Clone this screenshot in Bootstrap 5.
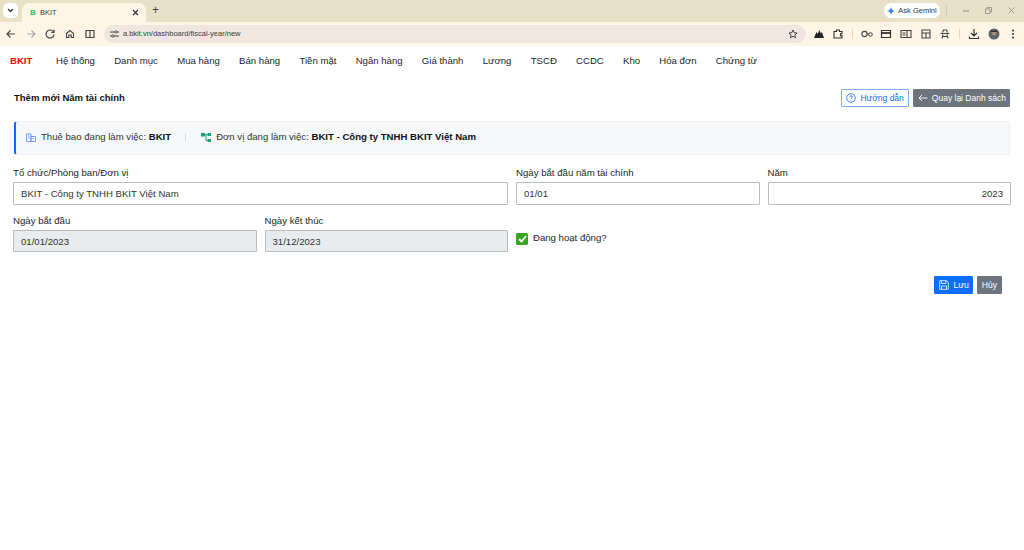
<!DOCTYPE html>
<html lang="vi">
<head>
  <meta charset="UTF-8" />
  <title>BKIT</title>
  <link href="https://cdn.jsdelivr.net/npm/bootstrap@5.3.3/dist/css/bootstrap.min.css" rel="stylesheet">
  <style>
    html, body { height: 100%; }
    body {
      background: #fff;
      color: #212529;
      font-family: "Liberation Sans", Arial, sans-serif;
      font-size: 9.6px;
      overflow: hidden;
    }
    .tab-strip { height: 22px; background: #e9e1c7; padding: 3px 0 0 3px; }
    .tab-list-btn { width: 15px; height: 15px; background: #fff; border-radius: 5px; margin-right: 4px; }
    .tab-item { width: 124px; height: 19px; background: #fdf6e6; border-radius: 7px 7px 0 0; padding: 0 7px 0 8px; font-size: 7.5px; color: #3c3c3c; }
    .tab-favicon { color: #22c55e; font-weight: 700; font-size: 8px; margin-right: 3px; width: 5px; }
    .tab-name { margin-left: 2px; }
    .new-tab { font-size: 12px; margin-left: 6px; color: #444; line-height: 1; padding-top: 1px; }
    .gemini-btn { height: 15px; width: 56px; background: #fff; border-radius: 7px; font-size: 7.5px; gap: 3px; color: #333; }
    .win-btns { width: 84px; height: 15px; padding: 0 9px 0 6px; }
    .win-sep { width: 1px; height: 9px; background: #cfc8b0; }
    .tool-row { height: 24px; background: #fdf6e6; padding: 0 0 0 4px; gap: 5.7px; }
    .tool-icon { width: 14px; height: 14px; flex: none; }
    .addr-pill { width: 702px; height: 18px; background: #efe7df; border-radius: 9px; margin-left: 1.5px; padding: 0 8px 0 6px; font-size: 7.5px; color: #3c3c3c; flex: none; }
    .tool-sep { width: 1px; height: 10px; background: #e8d9a0; flex: none; margin: 0 1px; }
    .app-nav { height: 29px; padding: 2px 0 0 10px; background: #fff; }
    .brand-txt { color: #f00; font-weight: 700; font-size: 9.6px; width: 46px; }
    .menu-item { color: #212529; font-size: 9.6px; margin-right: 19.25px; white-space: nowrap; }
    .page-wrap { padding: 0 13px; }
    .head-row { height: 46px; padding: 14px 1px 0 1px; }
    .page-title { font-size: 9.5px; font-weight: 700; color: #111; margin: 3px 0 0 0; }
    .btn-tiny { font-size: 8.5px; height: 18px; padding: 0 3px 0 4px; border-radius: 1px; display: inline-flex; align-items: center; gap: 4px; }
    .btn-help { --bs-btn-border-color: #7fb0fb; padding-right: 4px; }
    .info-strip { margin: 0 1px; height: 34px; background: #f7f8fa; border: 1px solid #f0f1f3; border-left: 2px solid #0d6efd; border-radius: 3px; padding: 0 0 2px 10px; font-size: 9.6px; color: #333; }
    .info-strip b { color: #111; }
    .info-lbl { margin-left: 5px; }
    .info-sep { width: 1px; height: 8px; background: #d8dbe0; margin: 0 15px 0 14px; }
    .form-zone { margin-top: 11px; }
    .form-zone .row { --bs-gutter-x: 8px; --bs-gutter-y: 0; }
    .fld-label { display: block; font-size: 9.65px; color: #212529; height: 14px; line-height: 14px; margin-bottom: 2px; }
    .fld-input { height: 23px; border: 1px solid #b9bcbf; border-radius: 1px; font-size: 9.6px; padding: 0 7px; color: #333; box-shadow: none; }
    .fld-input:disabled { background: #e9ecef; opacity: 1; height: 22px; }
    .row-two { margin-top: 9px; }
    .active-check { height: 23px; margin-top: 13px; gap: 5px; font-size: 9.6px; }
    .check-box { width: 12px; height: 12px; background: #37a51f; border-radius: 1.5px; flex: none; }
    .foot-bar { margin-top: 15px; height: 38px; border: 1px solid #fcfcfc; border-radius: 3px; padding: 8px 8px 0 0; gap: 4px; }
    .foot-bar .btn { font-size: 8.6px; height: 18px; padding: 0 4px; border-radius: 1px; display: inline-flex; align-items: center; gap: 4px; }
    .foot-bar .btn-primary { padding-right: 3px; }
  </style>
</head>
<body>
  <div class="tab-strip d-flex">
    <div class="tab-list-btn d-flex align-items-center justify-content-center">
      <svg width="7" height="5" viewBox="0 0 7 5"><path d="M1 1l2.500 2.500L6 1" fill="none" stroke="#333" stroke-width="1.400"/></svg>
    </div>
    <div class="tab-item d-flex align-items-center">
      <span class="tab-favicon">B</span><span class="tab-name">BKIT</span>
      <svg class="ms-auto" width="7" height="7" viewBox="0 0 7 7"><path d="M1 1l5 5M6 1L1 6" stroke="#333" stroke-width="1.200"/></svg>
    </div>
    <span class="new-tab">+</span>
    <div class="gemini-btn d-flex align-items-center justify-content-center ms-auto">
      <svg width="8" height="8" viewBox="0 0 8 8"><path d="M4 0C4.400 2.400 5.600 3.600 8 4 5.600 4.400 4.400 5.600 4 8 3.600 5.600 2.400 4.400 0 4 2.400 3.600 3.600 2.400 4 0z" fill="#3b82f6"/></svg>
      <span>Ask Gemini</span>
    </div>
    <div class="win-btns d-flex align-items-center justify-content-between">
      <span class="win-sep"></span>
      <svg width="6" height="2" viewBox="0 0 6 2"><path d="M0 1h6" stroke="#8d897c"/></svg>
      <svg width="7" height="7" viewBox="0 0 7 7"><path d="M.5 2h4.500v4.500H.5zM2 2V.5h4.500V5H5" fill="none" stroke="#8d897c" stroke-width=".8"/></svg>
      <svg width="7" height="7" viewBox="0 0 7 7"><path d="M.5.5l6 6M6.500.5l-6 6" stroke="#8d897c" stroke-width=".8"/></svg>
    </div>
  </div>

  <div class="tool-row d-flex align-items-center">
    <svg class="tool-icon" viewBox="0 0 14 14"><path d="M11 7H3M6.500 3.500L3 7l3.500 3.500" fill="none" stroke="#444" stroke-width="1.200"/></svg>
    <svg class="tool-icon" viewBox="0 0 14 14"><path d="M3 7h8M7.500 3.500L11 7l-3.500 3.500" fill="none" stroke="#aaa" stroke-width="1.200"/></svg>
    <svg class="tool-icon" viewBox="0 0 14 14"><path d="M10.500 5A4 4 0 1 0 11 7.500M11 2.800V5.500H8.300" fill="none" stroke="#444" stroke-width="1.200"/></svg>
    <svg class="tool-icon" viewBox="0 0 14 14"><path d="M3.500 6.500L7 3.500l3.500 3v4h-2.300V8H5.800v2.500H3.500z" fill="none" stroke="#444" stroke-width="1.100"/></svg>
    <svg class="tool-icon" viewBox="0 0 14 14"><path d="M3 3.500h8v7H3zM7 3.500v7" fill="none" stroke="#444" stroke-width="1.200"/></svg>
    <div class="addr-pill d-flex align-items-center">
      <svg width="9" height="8" viewBox="0 0 9 8" class="me-1"><path d="M0 2h5M7 2h2M0 6h2M4 6h5" stroke="#444"/><circle cx="6" cy="2" r="1.200" fill="none" stroke="#444" stroke-width=".8"/><circle cx="3" cy="6" r="1.200" fill="none" stroke="#444" stroke-width=".8"/></svg>
      <span>a.bkit.vn/dashboard/fiscal-year/new</span>
      <svg class="ms-auto" width="10" height="10" viewBox="0 0 10 10"><path d="M5 1l1.200 2.700 2.800.3-2.100 1.900.6 2.800L5 7.300 2.500 8.700l.6-2.800L1 4l2.800-.3z" fill="none" stroke="#333" stroke-width=".9"/></svg>
    </div>
    <svg class="tool-icon" viewBox="0 0 14 14"><path d="M2 11L4.500 5l1.200 2L7.300 3l1.500 3.500L9.800 5 12 11z" fill="#222"/></svg>
    <svg class="tool-icon" viewBox="0 0 14 14"><path d="M3 4.500h2.500V3h3v1.500H11v2.200H9.500v2H11V11H3z" fill="none" stroke="#333" stroke-width="1.100"/></svg>
    <span class="tool-sep"></span>
    <svg class="tool-icon" viewBox="0 0 14 14"><circle cx="4.500" cy="7" r="2.600" fill="none" stroke="#444" stroke-width="1.100"/><circle cx="10.500" cy="7.500" r="1.800" fill="none" stroke="#444"/><path d="M7 7h2" stroke="#444"/></svg>
    <svg class="tool-icon" viewBox="0 0 14 14"><path d="M2.500 3.500h9v7h-9z" fill="none" stroke="#333" stroke-width="1.200"/><path d="M2.500 6h9" stroke="#333" stroke-width="1.800"/></svg>
    <svg class="tool-icon" viewBox="0 0 14 14"><path d="M2 3.500h10v7H2zM8 3.500v7M3.500 6h3M3.500 8h3" fill="none" stroke="#444" stroke-width="1.100"/></svg>
    <svg class="tool-icon" viewBox="0 0 14 14"><path d="M3 3h8v8H3zM3 6h8M7 6v5" fill="none" stroke="#444" stroke-width="1.100"/></svg>
    <svg class="tool-icon" viewBox="0 0 14 14"><path d="M4.500 5.500L5.500 3h3l1 2.500M2.500 6.500h9M5 7.500L4 11.500M9 7.500l1 4M4 9.500h6" fill="none" stroke="#444" stroke-width="1.100"/></svg>
    <span class="tool-sep"></span>
    <svg class="tool-icon" viewBox="0 0 14 14"><path d="M7 2v6.500M4 6l3 3 3-3M2.500 9.500v2h9v-2" fill="none" stroke="#333" stroke-width="1.200"/></svg>
    <svg class="tool-icon" viewBox="0 0 14 14"><circle cx="7" cy="7" r="5.500" fill="#5b666a"/><circle cx="7" cy="6" r="2.400" fill="#a58c78"/><path d="M4 3.500h6v1.500H4z" fill="#2d2d2d"/></svg>
    <svg class="tool-icon" viewBox="0 0 14 14"><circle cx="7" cy="3.500" r="1" fill="#333"/><circle cx="7" cy="7" r="1" fill="#333"/><circle cx="7" cy="10.500" r="1" fill="#333"/></svg>
  </div>

  <nav class="app-nav d-flex align-items-center">
    <span class="brand-txt">BKIT</span>
    <span class="menu-item">Hệ thống</span>
    <span class="menu-item">Danh mục</span>
    <span class="menu-item">Mua hàng</span>
    <span class="menu-item">Bán hàng</span>
    <span class="menu-item">Tiền mặt</span>
    <span class="menu-item">Ngân hàng</span>
    <span class="menu-item">Giá thành</span>
    <span class="menu-item">Lương</span>
    <span class="menu-item">TSCĐ</span>
    <span class="menu-item">CCDC</span>
    <span class="menu-item">Kho</span>
    <span class="menu-item">Hóa đơn</span>
    <span class="menu-item">Chứng từ</span>
  </nav>

  <main class="page-wrap">
    <div class="head-row d-flex justify-content-between align-items-start">
      <h1 class="page-title">Thêm mới Năm tài chính</h1>
      <div class="d-flex gap-1">
        <button class="btn btn-outline-primary btn-tiny btn-help" type="button">
          <svg width="10" height="10" viewBox="0 0 10 10"><circle cx="5" cy="5" r="4.300" fill="none" stroke="currentColor" stroke-width=".8"/><path d="M3.700 4c0-1.700 2.700-1.700 2.700 0 0 1-1.400 1-1.400 2M5 7v.7" fill="none" stroke="currentColor" stroke-width=".8"/></svg>
          Hướng dẫn
        </button>
        <button class="btn btn-secondary btn-tiny" type="button">
          <svg width="10" height="8" viewBox="0 0 10 8"><path d="M9.500 4H1M4 1L1 4l3 3" fill="none" stroke="currentColor" stroke-width=".9"/></svg>
          Quay lại Danh sách
        </button>
      </div>
    </div>

    <div class="info-strip d-flex align-items-center">
      <svg width="10" height="9" viewBox="0 0 10 9"><path d="M.5 1h4.500v7.500H.5zM5 3.500h4.500v5H5zM2 3h1.500M2 5h1.500M6.500 5.500h1.500" fill="none" stroke="#5b9bf0" stroke-width=".9"/></svg>
      <span class="info-lbl">Thuê bao đang làm việc: <b>BKIT</b></span>
      <span class="info-sep"></span>
      <svg width="10" height="9" viewBox="0 0 10 9"><path d="M0 0h4v3.500H0zM6.500 0H10v3H6.500zM6.500 6H10v3H6.500z" fill="#17a673"/><path d="M4 1.700h2.500M5 1.700v5.800h1.500" fill="none" stroke="#17a673"/></svg>
      <span class="info-lbl">Đơn vị đang làm việc: <b>BKIT - Công ty TNHH BKIT Việt Nam</b></span>
    </div>

    <form class="form-zone">
      <div class="row">
        <div class="col-6">
          <label class="fld-label">Tổ chức/Phòng ban/Đơn vị</label>
          <input class="form-control fld-input" value="BKIT - Công ty TNHH BKIT Việt Nam">
        </div>
        <div class="col-3">
          <label class="fld-label">Ngày bắt đầu năm tài chính</label>
          <input class="form-control fld-input" value="01/01">
        </div>
        <div class="col-3">
          <label class="fld-label">Năm</label>
          <input class="form-control fld-input text-end" value="2023">
        </div>
      </div>
      <div class="row row-two">
        <div class="col-3">
          <label class="fld-label">Ngày bắt đầu</label>
          <input class="form-control fld-input" value="01/01/2023" disabled>
        </div>
        <div class="col-3">
          <label class="fld-label">Ngày kết thúc</label>
          <input class="form-control fld-input" value="31/12/2023" disabled>
        </div>
        <div class="col-6">
          <div class="active-check d-flex align-items-center">
            <span class="check-box d-flex align-items-center justify-content-center">
              <svg width="9" height="8" viewBox="0 0 9 8"><path d="M1 4l2.500 2.500L8 1.200" fill="none" stroke="#fff" stroke-width="1.800"/></svg>
            </span>
            <span>Đang hoạt động?</span>
          </div>
        </div>
      </div>
      <div class="foot-bar d-flex justify-content-end">
        <button class="btn btn-primary" type="button">
          <svg width="10" height="10" viewBox="0 0 10 10"><path d="M.7.700h7l1.600 1.600v7H.7zM2.500.700v2.800h4.500V.700M2.500 9.300V6h5v3.300" fill="none" stroke="currentColor" stroke-width=".8"/></svg>
          Lưu
        </button>
        <button class="btn btn-secondary" type="button">Hủy</button>
      </div>
    </form>
  </main>
</body>
</html>
